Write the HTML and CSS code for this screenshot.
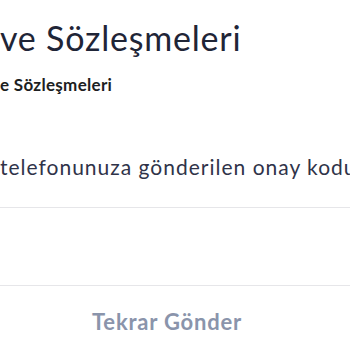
FILE: index.html
```html
<!DOCTYPE html>
<html lang="tr">
<head>
<meta charset="utf-8">
<link rel="stylesheet" href="styles.css">
</head>
<body>
<main class="page">
  <h1 class="title">ve Sözleşmeleri</h1>
  <h2 class="subtitle">e Sözleşmeleri</h2>
  <p class="desc">telefonunuza gönderilen onay kodunu giriniz</p>
  <div class="code-field"></div>
  <div class="actions">
    <button class="resend">Tekrar Gönder</button>
  </div>
</main>
</body>
</html>
```

FILE: styles.css
```css
html, body {
  margin: 0;
  padding: 0;
  background: #ffffff;
}
body {
  width: 350px;
  height: 350px;
  overflow: hidden;
  font-family: Lato, "Open Sans", sans-serif;
}
.page {
  display: flex;
  flex-direction: column;
  white-space: nowrap;
  overflow: hidden;
}
.title {
  margin: 18px 0 0 0;
  font-size: 34px;
  line-height: 40px;
  font-weight: 400;
  letter-spacing: 0.8px;
  color: #1f2537;
}
.subtitle {
  margin: 17px 0 0 0;
  font-size: 17px;
  line-height: 20px;
  font-weight: 700;
  letter-spacing: 0.3px;
  color: #1d1e22;
}
.desc {
  margin: 60px 0 0 0;
  font-size: 21px;
  line-height: 24px;
  letter-spacing: 1px;
  color: #2f3349;
}
.code-field {
  margin-top: 28px;
  height: 77px;
  border-top: 1px solid #e6e6e9;
  border-bottom: 1px solid #e6e6e9;
}
.actions {
  display: flex;
  padding: 24px 0 0 92px;
}
.resend {
  border: 0;
  background: none;
  padding: 0;
  font-family: inherit;
  font-size: 22px;
  line-height: 24px;
  font-weight: 700;
  letter-spacing: 0.8px;
  color: #8a94ab;
}
```
